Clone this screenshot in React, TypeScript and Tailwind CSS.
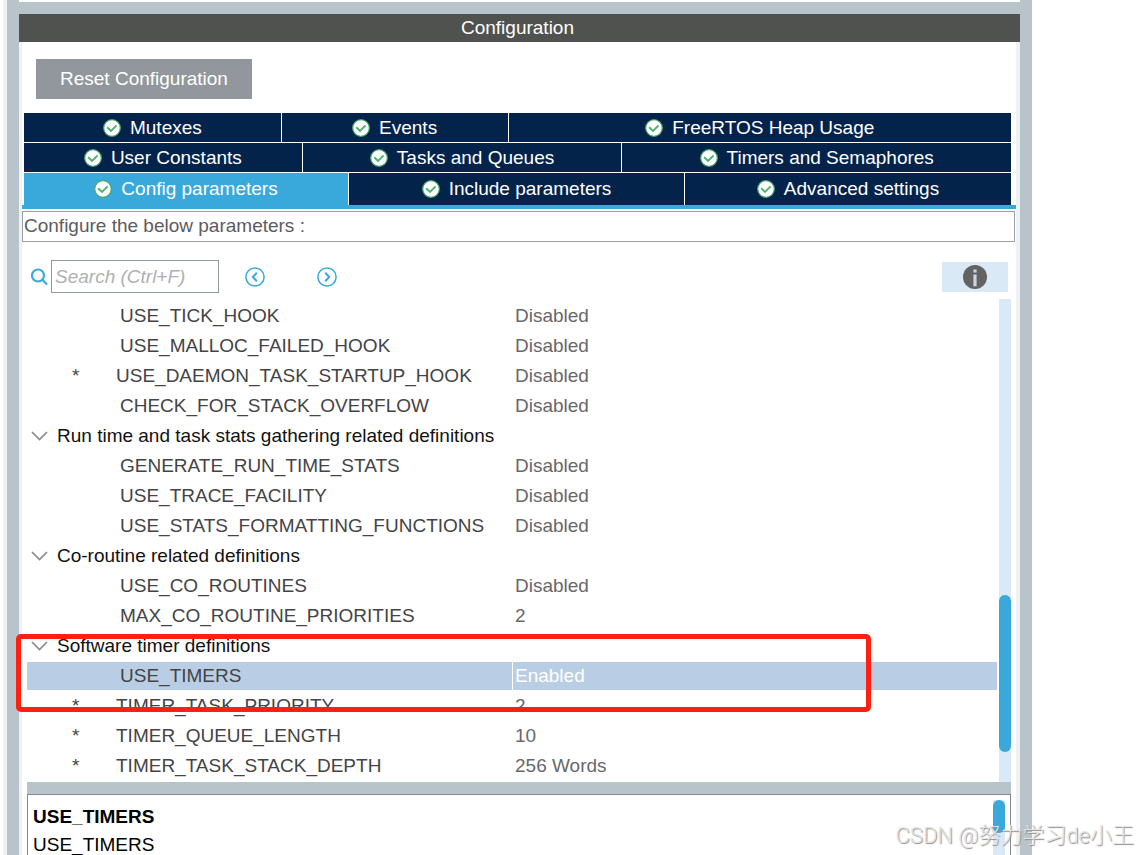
import React from "react";

type Tab = { label: string; active?: boolean };

const tabRows: { columns: string; height: string; tabs: Tab[] }[] = [
  {
    columns: "grid-cols-[257fr_226fr_503fr]",
    height: "h-[29px]",
    tabs: [{ label: "Mutexes" }, { label: "Events" }, { label: "FreeRTOS Heap Usage" }],
  },
  {
    columns: "grid-cols-[278fr_319fr_389fr]",
    height: "h-[29px]",
    tabs: [{ label: "User Constants" }, { label: "Tasks and Queues" }, { label: "Timers and Semaphores" }],
  },
  {
    columns: "grid-cols-[324fr_335fr_326fr]",
    height: "h-8",
    tabs: [{ label: "Config parameters", active: true }, { label: "Include parameters" }, { label: "Advanced settings" }],
  },
];

type Param = { name: string; value: string; starred?: boolean; selected?: boolean };
type Group = { title?: string; params: Param[] };

const groups: Group[] = [
  {
    params: [
      { name: "USE_TICK_HOOK", value: "Disabled" },
      { name: "USE_MALLOC_FAILED_HOOK", value: "Disabled" },
      { name: "USE_DAEMON_TASK_STARTUP_HOOK", value: "Disabled", starred: true },
      { name: "CHECK_FOR_STACK_OVERFLOW", value: "Disabled" },
    ],
  },
  {
    title: "Run time and task stats gathering related definitions",
    params: [
      { name: "GENERATE_RUN_TIME_STATS", value: "Disabled" },
      { name: "USE_TRACE_FACILITY", value: "Disabled" },
      { name: "USE_STATS_FORMATTING_FUNCTIONS", value: "Disabled" },
    ],
  },
  {
    title: "Co-routine related definitions",
    params: [
      { name: "USE_CO_ROUTINES", value: "Disabled" },
      { name: "MAX_CO_ROUTINE_PRIORITIES", value: "2" },
    ],
  },
  {
    title: "Software timer definitions",
    params: [
      { name: "USE_TIMERS", value: "Enabled", selected: true },
      { name: "TIMER_TASK_PRIORITY", value: "2", starred: true },
      { name: "TIMER_QUEUE_LENGTH", value: "10", starred: true },
      { name: "TIMER_TASK_STACK_DEPTH", value: "256 Words", starred: true },
    ],
  },
];

function CheckBadge() {
  return (
    <svg className="size-5 shrink-0" viewBox="0 0 20 20" aria-hidden="true">
      <circle cx="10" cy="10" r="8.3" fill="#fff" stroke="#45a866" strokeWidth="1.2" />
      <path d="M5.2 9.2 9 12.9 14.6 7.4" fill="none" stroke="#4fb274" strokeWidth="2" />
    </svg>
  );
}

function TabButton({ label, active }: Tab) {
  return (
    <button
      role="tab"
      aria-selected={!!active}
      className={`flex min-w-0 items-center justify-center gap-2 whitespace-nowrap pr-px text-white ${
        active ? "bg-[#39a9dc]" : "bg-[#03234b]"
      }`}
    >
      <CheckBadge />
      {label}
    </button>
  );
}

function CircleArrow({ label, d }: { label: string; d: string }) {
  return (
    <button aria-label={label} className="size-5">
      <svg className="size-5" viewBox="0 0 20 20" fill="none" stroke="#39a9dc">
        <circle cx="10" cy="10" r="9.1" strokeWidth="1.5" />
        <path d={d} strokeWidth="2" />
      </svg>
    </button>
  );
}

function ParamRow({ name, value, starred, selected }: Param) {
  const fill = selected ? "bg-[#b9cee5]" : "";
  return (
    <tr className="h-[30px]">
      <th scope="row" className="px-0 py-px text-left font-normal text-[#444446]">
        <span className={`flex h-7 items-center ${fill}`}>
          {starred ? (
            <>
              <span className="w-11 pl-[45px]">*</span>
              <span className="pl-11">{name}</span>
            </>
          ) : (
            <span className="pl-[93px]">{name}</span>
          )}
        </span>
      </th>
      <td className={`py-px pr-0 pl-px ${selected ? "text-white" : "text-[#68686a]"}`}>
        <span className={`flex h-7 items-center pl-[2px] ${fill}`}>{value}</span>
      </td>
    </tr>
  );
}

function GroupRow({ title }: { title: string }) {
  return (
    <tr className="h-[30px]">
      <th scope="colgroup" colSpan={2} className="p-0 text-left font-normal text-[#111]">
        <button className="flex h-[30px] items-center gap-[9px] pl-1">
          <svg className="h-4 w-[17px]" viewBox="0 0 17 16" fill="none" stroke="#8a8a8a" strokeWidth="1.7">
            <path d="M1 4 8.5 11.5 16 4" />
          </svg>
          {title}
        </button>
      </th>
    </tr>
  );
}

export default function App() {
  return (
    <div className="relative h-screen overflow-hidden bg-white font-['Liberation_Sans',Arial,sans-serif] text-[19px] leading-[28px]">
      <main className="mr-[106px] ml-[3px] flex h-full border-l-4 border-[#f1f1f1]">
        <div className="flex min-w-0 flex-1 flex-col border-x-[12px] border-[#b8c4ca]">
          <div className="h-[2px] shrink-0 bg-white" />
          <div className="h-3 shrink-0 bg-[#b8c4ca]" />
          <h1 className="h-7 shrink-0 bg-[#505250] pr-1 text-center text-white">Configuration</h1>

          <div className="flex min-h-0 flex-1 flex-col border-r-4 border-l-[3px] border-r-[#eff2f4] border-l-[#f1f2f3] pt-[17px]">
            <div className="px-[14px]">
              <button className="h-10 bg-[#91979c] px-6 text-white">Reset Configuration</button>
            </div>

            <div className="mt-[14px] flex shrink-0 flex-col gap-px pr-[5px] pl-[2px]" role="tablist">
              {tabRows.map((row) => (
                <div key={row.columns} className={`grid gap-px ${row.columns} ${row.height}`}>
                  {row.tabs.map((tab) => (
                    <TabButton key={tab.label} {...tab} />
                  ))}
                </div>
              ))}
            </div>
            <div className="h-1 shrink-0 bg-[#39a9dc]" />

            <p className="mt-[2px] mr-px h-[31px] shrink-0 border border-[#989ea3] px-px text-[#5c5c60]">
              Configure the below parameters :
            </p>

            <div className="mt-[18px] flex shrink-0 items-center pr-2 pl-2">
              <label htmlFor="search" aria-label="Search" className="mr-[3px]">
                <svg className="size-[18px]" viewBox="0 0 18 18" fill="none" stroke="#39a9dc" strokeWidth="2.2">
                  <circle cx="8" cy="7.5" r="6" />
                  <path d="M12.4 11.8 17 16.5" />
                </svg>
              </label>
              <input
                id="search"
                placeholder="Search (Ctrl+F)"
                className="h-[33px] w-[168px] border border-[#8f969c] px-[3px] italic outline-none placeholder:text-[#b0b0b0]"
              />
              <div className="ml-[26px] flex gap-[52px]">
                <CircleArrow label="Previous match" d="M11.8 5.8 7.8 10 11.8 14.2" />
                <CircleArrow label="Next match" d="M8.2 5.8 12.2 10 8.2 14.2" />
              </div>
              <button aria-label="Information" className="ml-auto flex h-[30px] w-[66px] items-center justify-center bg-[#d9e9f6]">
                <svg className="size-6" viewBox="0 0 24 24">
                  <circle cx="12" cy="12" r="12" fill="#636363" />
                  <path d="M10.4 4.6h3.2v3h-3.2zM10.4 9.5h3.2v11.7h-3.2z" fill="#c9d6e0" />
                </svg>
              </button>
            </div>

            <section className="mt-[6px] flex shrink-0 gap-[2px] pr-[5px] pl-[5px]">
              <table className="mt-[2px] mb-px flex-1 table-fixed border-collapse">
                <colgroup>
                  <col className="w-1/2" />
                  <col className="w-1/2" />
                </colgroup>
                <tbody>
                  {groups.map((group, i) => (
                    <React.Fragment key={i}>
                      {group.title && <GroupRow title={group.title} />}
                      {group.params.map((param) => (
                        <ParamRow key={param.name} {...param} />
                      ))}
                    </React.Fragment>
                  ))}
                </tbody>
              </table>
              <div className="flex w-3 flex-col bg-[#d9e9f6] pt-[296px]">
                <div className="h-[157px] rounded-full bg-[#39a9dc]" />
              </div>
            </section>

            <div className="mr-[5px] ml-[5px] h-3 shrink-0 bg-[#b8c4ca]" />

            <section className="mr-[5px] ml-[5px] flex min-h-0 flex-1 justify-between overflow-hidden border border-b-0 border-[#7f8b9b] pr-[5px] pl-[5px] text-black">
              <div className="pt-2">
                <h2 className="font-bold">USE_TIMERS</h2>
                <p>USE_TIMERS</p>
              </div>
              <div className="mt-[5px] w-3 bg-[#d9e9f6]">
                <div className="h-[33px] rounded-full bg-[#39a9dc]" />
              </div>
            </section>
          </div>
        </div>
      </main>

      <div className="pointer-events-none absolute top-[634px] right-[267px] left-4 h-[78px] rounded-[5px] border-[5px] border-[#ff2012]" />
      <div className="pointer-events-none absolute right-1 bottom-[3px] text-[22px] leading-8 font-light whitespace-nowrap text-[#e4e4e4] font-['Roboto','Noto_Sans_CJK_SC',sans-serif] [text-shadow:1px_1px_1px_#8c8c8c]">
        CSDN @努力学习de小王
      </div>
    </div>
  );
}
